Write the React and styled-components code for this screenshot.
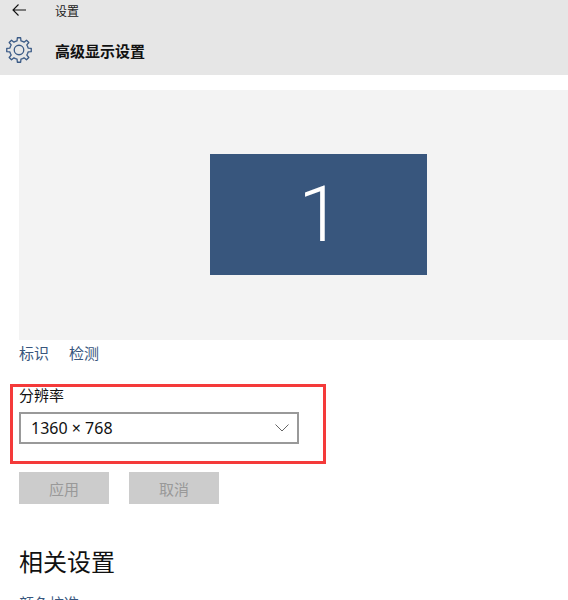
import React from 'react'
import styled, { createGlobalStyle } from 'styled-components'

const GlobalStyle = createGlobalStyle`
  html, body {
    margin: 0;
    padding: 0;
    height: 600px;
    overflow: hidden;
    background: #fff;
    font-family: "Noto Sans CJK SC", "Liberation Sans", sans-serif;
  }
`

// outline of the eight-tooth settings gear
const gearPath = () => {
  const teeth = 8
  const outer = 11.4
  const inner = 8.6
  let d = ''
  for (let i = 0; i < teeth; i++) {
    const step = (Math.PI * 2) / teeth
    const a = i * step - Math.PI / 2
    const pts = [
      [inner, a - step * 0.5],
      [inner, a - step * 0.27],
      [outer, a - step * 0.17],
      [outer, a + step * 0.17],
      [inner, a + step * 0.27],
    ]
    pts.forEach(([r, t], j) => {
      const x = (12 + r * Math.cos(t)).toFixed(2)
      const y = (12 + r * Math.sin(t)).toFixed(2)
      d += (i === 0 && j === 0 ? 'M' : 'L') + x + ' ' + y + ' '
    })
  }
  return d + 'Z'
}

const GearIcon = () => (
  <svg width="26" height="26" viewBox="0 0 24 24" fill="none" stroke="#3a5a86" strokeWidth="1.2" strokeLinejoin="round">
    <path d={gearPath()} />
    <circle cx="12" cy="12" r="4.4" />
  </svg>
)

const BackIcon = () => (
  <svg width="14" height="12" viewBox="0 0 14 12" fill="none" stroke="#111" strokeWidth="1.1">
    <path d="M14 6H1M6.5 .5L1 6l5.5 5.5" />
  </svg>
)

const ChevronIcon = () => (
  <svg width="14" height="8" viewBox="0 0 14 8" fill="none" stroke="#666" strokeWidth="1">
    <path d="M.5 .5L7 7l6.5-6.5" />
  </svg>
)

export default function App() {
  return (
    <Page>
      <GlobalStyle />
      <Header>
        <TopRow>
          <BackIcon />
          <TopTitle>设置</TopTitle>
        </TopRow>
        <TitleRow>
          <GearIcon />
          <PageTitle>高级显示设置</PageTitle>
        </TitleRow>
      </Header>

      <Content>
        <Preview>
          <Monitor>1</Monitor>
        </Preview>

        <Links>
          <LinkText>标识</LinkText>
          <LinkText>检测</LinkText>
        </Links>

        <Resolution>
          <Highlight />
          <FieldLabel>分辨率</FieldLabel>
          <Select>
            <span>1360 × 768</span>
            <ChevronIcon />
          </Select>
        </Resolution>

        <Buttons>
          <DisabledButton>应用</DisabledButton>
          <DisabledButton>取消</DisabledButton>
        </Buttons>

        <SectionTitle>相关设置</SectionTitle>
        <LinkText>颜色校准</LinkText>
      </Content>
    </Page>
  )
}

const Page = styled.div`
  width: 568px;
  height: 600px;
  overflow: hidden;
`

const Header = styled.header`
  height: 75px;
  background: #e6e6e6;
`

const TopRow = styled.div`
  display: flex;
  align-items: center;
  height: 20px;
  padding-left: 12px;
`

const TopTitle = styled.span`
  margin-left: 29px;
  font-size: 12px;
  color: #222;
`

const TitleRow = styled.div`
  display: flex;
  align-items: center;
  height: 36px;
  margin-top: 12px;
  padding-left: 6px;
`

const PageTitle = styled.h1`
  margin: 0 0 0 23px;
  font-size: 15px;
  font-weight: 700;
  color: #111;
`

const Content = styled.main`
  padding: 15px 0 0 19px;
`

const Preview = styled.div`
  display: flex;
  height: 250px;
  padding: 64px 0 0 191px;
  box-sizing: border-box;
  background: #f3f3f3;
`

const Monitor = styled.div`
  display: flex;
  align-items: center;
  justify-content: center;
  width: 217px;
  height: 121px;
  padding-left: 3px;
  box-sizing: border-box;
  background: #38567d;
  color: #fff;
  font-family: "Roboto", sans-serif;
  font-weight: 300;
  font-size: 78px;
  line-height: 1;
`

const Links = styled.div`
  display: flex;
  gap: 20px;
  margin-top: 3px;
  height: 20px;
  align-items: center;
`

const LinkText = styled.span`
  display: block;
  font-size: 15px;
  line-height: 20px;
  color: #38567d;
`

const Resolution = styled.section`
  position: relative;
  margin-top: 22px;
`

const Highlight = styled.div`
  position: absolute;
  left: -9px;
  top: -1px;
  width: 316px;
  height: 80px;
  box-sizing: border-box;
  border: 3px solid #f43a3a;
`

const FieldLabel = styled.div`
  font-size: 15px;
  line-height: 20px;
  color: #111;
`

const Select = styled.div`
  display: flex;
  align-items: center;
  justify-content: space-between;
  width: 280px;
  height: 32px;
  margin-top: 7px;
  padding: 0 8px 0 10px;
  box-sizing: border-box;
  border: 2px solid #999;
  font-family: "Noto Sans", "Open Sans", sans-serif;
  font-size: 16px;
  color: #111;
`

const Buttons = styled.div`
  display: flex;
  gap: 20px;
  margin-top: 28px;
`

const DisabledButton = styled.div`
  display: flex;
  align-items: center;
  justify-content: center;
  width: 90px;
  height: 32px;
  background: #ccc;
  color: #999;
  font-size: 15px;
`

const SectionTitle = styled.h2`
  margin: 39px 0 14px;
  font-size: 24px;
  line-height: 36px;
  font-weight: 400;
  color: #111;
`
